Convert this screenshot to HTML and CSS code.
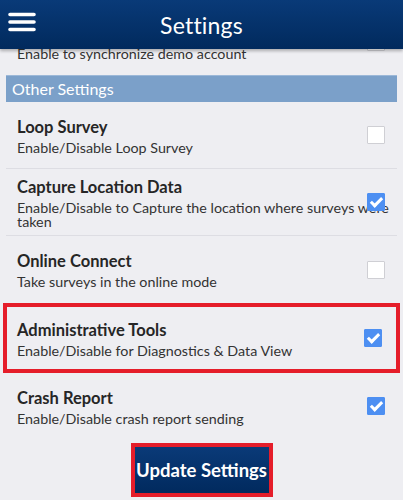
FILE: index.html
```
<!DOCTYPE html>
<html lang="en">
<head>
<meta charset="utf-8">
<title>Settings</title>
<link rel="stylesheet" href="styles.css">
</head>
<body>
<div class="app">
  <header class="topbar">
    <button class="menu" aria-label="Menu">
      <svg width="28" height="22" viewBox="0 0 28 22">
        <path d="M2 3.5H26M2 11H26M2 18.5H26" stroke="#fff" stroke-width="3.6" stroke-linecap="round" fill="none"/>
      </svg>
    </button>
    <h1 class="title">Settings</h1>
  </header>

  <main class="list">
    <div class="row">
      <div class="text">
        <div class="name name-hidden"></div>
        <div class="desc">Enable to synchronize demo account</div>
      </div>
      <span class="cb"></span>
    </div>

    <div class="section">Other Settings</div>

    <div class="row sep">
      <div class="text">
        <div class="name">Loop Survey</div>
        <div class="desc">Enable/Disable Loop Survey</div>
      </div>
      <span class="cb"></span>
    </div>

    <div class="row sep">
      <div class="text">
        <div class="name">Capture Location Data</div>
        <div class="desc">Enable/Disable to Capture the location where surveys were taken</div>
      </div>
      <span class="cb checked"></span>
    </div>

    <div class="row">
      <div class="text">
        <div class="name">Online Connect</div>
        <div class="desc">Take surveys in the online mode</div>
      </div>
      <span class="cb"></span>
    </div>

    <div class="row highlight">
      <div class="text">
        <div class="name">Administrative Tools</div>
        <div class="desc">Enable/Disable for Diagnostics &amp; Data View</div>
      </div>
      <span class="cb checked"></span>
    </div>

    <div class="row sep faint">
      <div class="text">
        <div class="name">Crash Report</div>
        <div class="desc">Enable/Disable crash report sending</div>
      </div>
      <span class="cb checked"></span>
    </div>
  </main>

  <footer class="footer">
    <button class="update">Update Settings</button>
  </footer>
</div>
</body>
</html>
```
FILE: styles.css
```
* { box-sizing: border-box; }

html, body {
  margin: 0;
  padding: 0;
}

body {
  background: #eeeef2;
  font-family: Lato, "Open Sans", sans-serif;
  color: #222;
}

.app {
  position: relative;
  height: 500px;
  display: flex;
  flex-direction: column;
  overflow: hidden;
}

/* app bar floats over the scrolled list */
.topbar {
  position: absolute;
  top: 0;
  left: 0;
  right: 0;
  z-index: 2;
  height: 49px;
  display: flex;
  align-items: center;
  justify-content: center;
  background: linear-gradient(#093a78, #012a5d);
  box-shadow: 0 2px 3px rgba(0, 0, 0, 0.28);
}

.menu {
  position: absolute;
  left: 8px;
  top: 11px;
  padding: 0;
  border: 0;
  background: none;
  display: block;
  line-height: 0;
}

.title {
  margin: 0;
  font-weight: 400;
  font-size: 23px;
  color: #fff;
  line-height: 28px;
  letter-spacing: 0.2px;
}

.list {
  flex: 1;
  overflow: hidden;
  padding-top: 8px;
}

.row {
  display: grid;
  align-items: center;
  min-height: 67px;
  margin: 0 6px;
  padding: 0 6px 0 11px;
}

.row > * {
  grid-area: 1 / 1;
}

.sep {
  border-bottom: 1px solid #dddde3;
}

.row.faint {
  border-bottom-color: #e4e4ea;
}

.text {
  min-width: 0;
}

.name {
  font-size: 16.5px;
  font-weight: 700;
  line-height: 22px;
  color: #262626;
}

.name-hidden {
  height: 22px;
}

.desc {
  margin-top: 3px;
  font-size: 14.3px;
  line-height: 14px;
  color: #333;
}

.cb {
  justify-self: end;
  margin-right: 6px;
  width: 18px;
  height: 18px;
  background: #fff;
  border: 1px solid #cfcfd4;
  border-radius: 1px;
  position: relative;
}

.cb.checked {
  background: #4d8ff2;
  border-color: #4d8ff2;
}

.cb.checked::after {
  content: "";
  position: absolute;
  left: 5px;
  top: 1px;
  width: 4px;
  height: 9px;
  border: solid #fff;
  border-width: 0 3px 3px 0;
  transform: rotate(45deg);
}

.section {
  margin: 0 6px;
  height: 27px;
  padding-left: 6px;
  background: #7ba0c9;
  border-top: 1px solid #9cb8d8;
  color: #fff;
  font-size: 16px;
  line-height: 25px;
}

.highlight {
  margin: 0 3px;
  min-height: 70px;
  padding: 0 10px 0 10px;
  border: 4px solid #e51d2a;
}

.highlight .cb {
  margin-right: 4px;
}

.footer {
  flex: none;
  height: 63px;
  display: flex;
  justify-content: center;
  padding-top: 6px;
}

.update {
  width: 142px;
  height: 54px;
  padding: 0;
  border: 4px solid #e51d2a;
  background: linear-gradient(#0a3a78, #012a5e);
  color: #fff;
  font-family: Lato, "Open Sans", sans-serif;
  font-size: 18.5px;
  font-weight: 700;
  white-space: nowrap;
}
```
